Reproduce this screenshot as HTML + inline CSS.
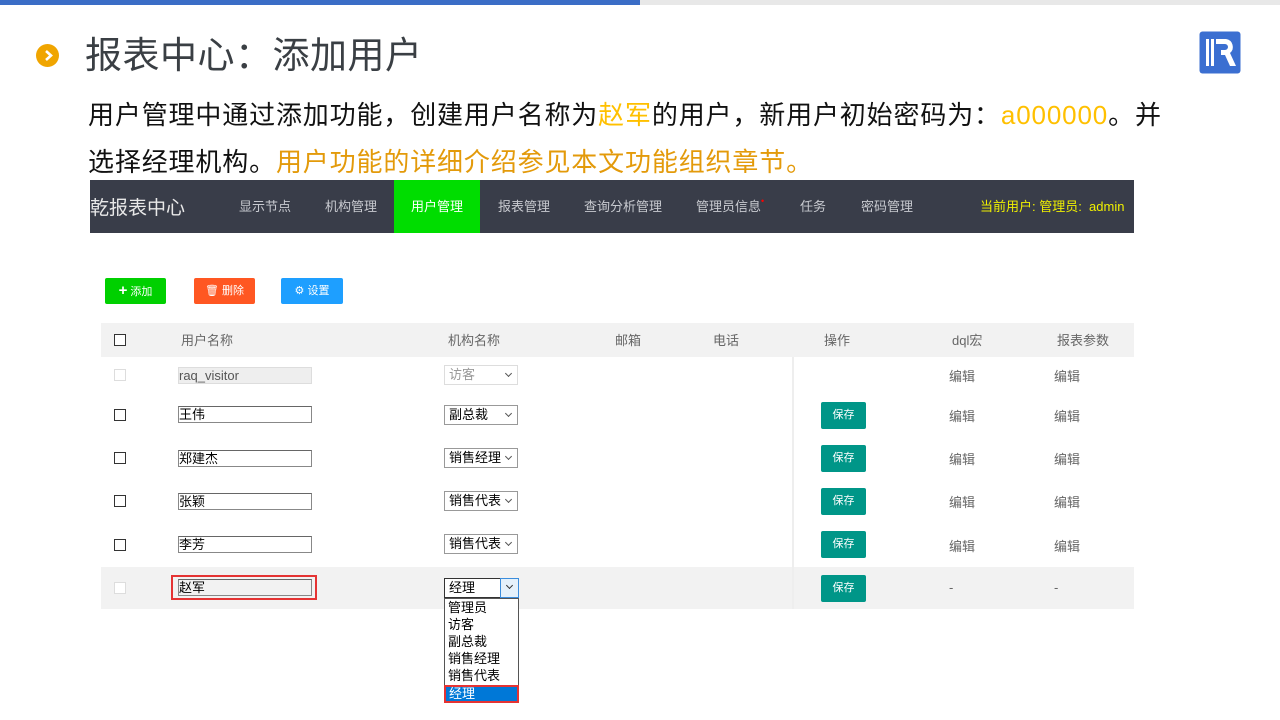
<!DOCTYPE html>
<html><head><meta charset="utf-8"><style>
*{margin:0;padding:0;box-sizing:border-box}
body{width:1280px;height:720px;background:#fff;position:relative;overflow:hidden;font-family:"Liberation Sans","Noto Sans CJK SC",sans-serif}
.a{position:absolute;white-space:nowrap}
.nav{color:#c8cad0;font-size:13px;top:196px}
.th{color:#666;font-size:13px;top:330px}
.cb{width:12px;height:12px;border:1px solid #333;background:#fff}
.cbd{border-color:#ddd}
.inp{height:17px;width:134px;border:1px solid #888;border-top-color:#666;font-size:13px;line-height:15px;color:#000;padding-left:0}
.sel{height:20px;width:74px;border:1px solid #999;font-size:13px;line-height:18px;padding-left:4px;color:#000;background:#fff}
.sel:after{content:"";position:absolute;right:6px;top:5px;width:4px;height:4px;border-right:1px solid #555;border-bottom:1px solid #555;transform:rotate(45deg)}
.sv{width:45px;height:27px;background:#009688;border-radius:2px;color:#fff;font-size:11px;line-height:27px;text-align:center}
.ed{color:#666;font-size:13px}
.li{font-size:13px;line-height:17px;padding-left:3px;color:#000}
</style></head><body>
<div class="a" style="left:0;top:0;width:640px;height:5px;background:#3b6dc6"></div>
<div class="a" style="left:640px;top:0;width:640px;height:5px;background:#e8e8e8"></div>
<div class="a" style="left:36px;top:44px;width:23px;height:23px;border-radius:50%;background:#f0a500"></div>
<svg class="a" style="left:36px;top:44px" width="23" height="23"><path d="M10 7l5 4.5-5 4.5" stroke="#fff" stroke-width="2.6" fill="none"/></svg>
<div class="a" style="left:85px;top:34px;font-size:37px;color:#3a3f44;line-height:44px;letter-spacing:0.5px">报表中心：添加用户</div>
<div class="a" style="left:88px;top:97px;font-size:26px;line-height:36px;color:#111;letter-spacing:0.85px">用户管理中通过添加功能，创建用户名称为<span style="color:#ffc000">赵军</span>的用户，新用户初始密码为：<span style="color:#ffc000">a000000</span>。并</div>
<div class="a" style="left:88px;top:144px;font-size:26px;line-height:36px;color:#111;letter-spacing:0.85px">选择经理机构。<span style="color:#e39a0a">用户功能的详细介绍参见本文功能组织章节。</span></div>
<svg class="a" style="left:1199px;top:31px" width="42" height="43" viewBox="0 0 42 43"><rect x="0.5" y="0.5" width="41" height="42" rx="3" fill="#3b6fd1"/><rect x="7" y="8" width="3" height="27" fill="#fff"/><rect x="12" y="8" width="3" height="27" fill="#fff"/><path d="M17 8h10a8 8 0 0 1 4 14l6 13h-6l-5-11h-4v-5h4a3 3 0 0 0 0-6h-9z" fill="#fff"/></svg>
<div class="a" style="left:90px;top:180px;width:1044px;height:53px;background:#393d49"></div>
<div class="a" style="left:394px;top:180px;width:86px;height:53px;background:#00dd00"></div>
<div class="a" style="left:90px;top:193px;font-size:19px;color:#e8e8e8">乾报表中心</div>
<div class="a nav" style="left:239px">显示节点</div>
<div class="a nav" style="left:325px">机构管理</div>
<div class="a nav" style="left:411px;color:#fff">用户管理</div>
<div class="a nav" style="left:498px">报表管理</div>
<div class="a nav" style="left:584px">查询分析管理</div>
<div class="a nav" style="left:696px">管理员信息<span style="color:#f00;font-size:9px;vertical-align:top">•</span></div>
<div class="a nav" style="left:800px">任务</div>
<div class="a nav" style="left:861px">密码管理</div>
<div class="a nav" style="left:980px;color:#f0f000">当前用户: 管理员:&nbsp; admin</div>
<div class="a" style="left:105px;top:278px;width:61px;height:26px;background:#00d000;border-radius:2px;color:#fff;font-size:11px;line-height:26px;text-align:center"><b style="font-size:15px">+</b> 添加</div>
<div class="a" style="left:194px;top:278px;width:61px;height:26px;background:#ff5722;border-radius:2px;color:#fff;font-size:11px;line-height:26px;text-align:center">🗑 删除</div>
<div class="a" style="left:281px;top:278px;width:62px;height:26px;background:#1e9fff;border-radius:2px;color:#fff;font-size:11px;line-height:26px;text-align:center">⚙ 设置</div>
<div class="a" style="left:101px;top:323px;width:1033px;height:34px;background:#f2f2f2"></div>
<div class="a" style="left:101px;top:567px;width:1033px;height:42px;background:#f2f2f2"></div>
<div class="a" style="left:792px;top:357px;width:2px;height:252px;background:#eee"></div>
<div class="a cb" style="left:114px;top:334px"></div>
<div class="a th" style="left:181px">用户名称</div>
<div class="a th" style="left:448px">机构名称</div>
<div class="a th" style="left:615px">邮箱</div>
<div class="a th" style="left:713px">电话</div>
<div class="a th" style="left:824px">操作</div>
<div class="a th" style="left:952px">dql宏</div>
<div class="a th" style="left:1057px">报表参数</div>
<div class="a cb cbd" style="left:114px;top:369px"></div>
<div class="a inp" style="left:178px;top:367px;background:#eee;border-color:#ddd;color:#555">raq_visitor</div>
<div class="a sel" style="left:444px;top:365px;border-color:#ddd;color:#999">访客</div>
<div class="a ed" style="left:949px;top:366px">编辑</div><div class="a ed" style="left:1054px;top:366px">编辑</div>
<div class="a cb" style="left:114px;top:409px"></div>
<div class="a inp" style="left:178px;top:406px">王伟</div>
<div class="a sel" style="left:444px;top:405px">副总裁</div>
<div class="a sv" style="left:821px;top:402px">保存</div>
<div class="a ed" style="left:949px;top:406px">编辑</div><div class="a ed" style="left:1054px;top:406px">编辑</div>
<div class="a cb" style="left:114px;top:452px"></div>
<div class="a inp" style="left:178px;top:450px">郑建杰</div>
<div class="a sel" style="left:444px;top:448px">销售经理</div>
<div class="a sv" style="left:821px;top:445px">保存</div>
<div class="a ed" style="left:949px;top:449px">编辑</div><div class="a ed" style="left:1054px;top:449px">编辑</div>
<div class="a cb" style="left:114px;top:495px"></div>
<div class="a inp" style="left:178px;top:493px">张颖</div>
<div class="a sel" style="left:444px;top:491px">销售代表</div>
<div class="a sv" style="left:821px;top:488px">保存</div>
<div class="a ed" style="left:949px;top:492px">编辑</div><div class="a ed" style="left:1054px;top:492px">编辑</div>
<div class="a cb" style="left:114px;top:539px"></div>
<div class="a inp" style="left:178px;top:536px">李芳</div>
<div class="a sel" style="left:444px;top:534px">销售代表</div>
<div class="a sv" style="left:821px;top:531px">保存</div>
<div class="a ed" style="left:949px;top:536px">编辑</div><div class="a ed" style="left:1054px;top:536px">编辑</div>
<div class="a cb cbd" style="left:114px;top:582px"></div>
<div class="a" style="left:171px;top:575px;width:146px;height:25px;border:2px solid #e53333"></div>
<div class="a inp" style="left:178px;top:579px">赵军</div>
<div class="a" style="left:444px;top:578px;width:75px;height:20px;border:1px solid #333;font-size:13px;line-height:18px;padding-left:4px;background:#fff">经理</div>
<div class="a" style="left:500px;top:578px;width:19px;height:20px;border:1px solid #3c8ddc;background:#e5f1fb"></div>
<div class="a" style="left:507px;top:583px;width:5px;height:5px;border-right:1px solid #333;border-bottom:1px solid #333;transform:rotate(45deg)"></div>
<div class="a sv" style="left:821px;top:575px">保存</div>
<div class="a ed" style="left:949px;top:580px">-</div><div class="a ed" style="left:1054px;top:580px">-</div>
<div class="a" style="left:444px;top:598px;width:75px;height:105px;border:1px solid #555;background:#fff">
<div class="li">管理员</div><div class="li">访客</div><div class="li">副总裁</div><div class="li">销售经理</div><div class="li">销售代表</div>
</div>
<div class="a li" style="left:444px;top:685px;width:75px;height:18px;background:#0078d7;color:#fff;border:2px solid #e53333;line-height:14px">经理</div>
</body></html>
